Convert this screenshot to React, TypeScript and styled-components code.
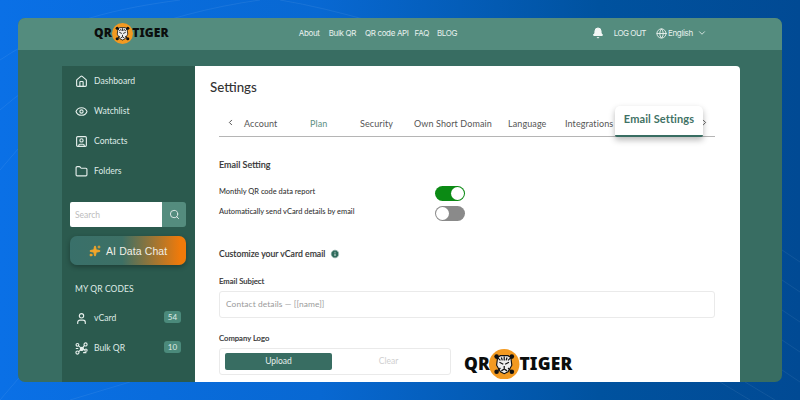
import React from "react";
import styled, { createGlobalStyle } from "styled-components";
import { House, Eye, SquareUser, Folder, Search, Sparkles, User, Bell, Globe, ChevronDown, ChevronLeft, ChevronRight, Info } from "lucide-react";

const Global = createGlobalStyle`
  html, body { margin: 0; padding: 0; width: 800px; height: 400px; overflow: hidden; }
  * { box-sizing: border-box; }
  body { font-family: "Lato", "Liberation Sans", sans-serif; }
`;

const Page = styled.div`
  position: relative;
  width: 800px;
  height: 400px;
  padding: 18px;
  overflow: hidden;
  background: linear-gradient(90deg, #0a70e6 0%, #0868d2 40%, #00529f 75%, #014a94 100%);
`;
const Decor = styled.svg`
  position: absolute;
  inset: 0;
  width: 800px;
  height: 400px;
`;
const Win = styled.div`
  position: relative;
  width: 764px;
  height: 364px;
  border-radius: 7px;
  overflow: hidden;
  background: #386d62;
  display: flex;
  flex-direction: column;
`;
const Header = styled.header`
  height: 32px;
  flex: none;
  background: #548c7e;
  display: flex;
  align-items: center;
  padding: 0 0 2px 76px;
  color: #e8f1ee;
  font-family: "Inter", "Noto Sans", sans-serif;
  font-size: 8px;
  letter-spacing: -0.35px;
`;
const NavList = styled.nav`
  margin-left: 130px;
  display: flex;
`;
const NavLink = styled.span<{ $gap?: number }>`
  margin-right: ${(p) => p.$gap ?? 0}px;
`;
const HeaderRight = styled.div`
  margin-left: 134.5px;
  display: flex;
  align-items: center;
`;
const LogOut = styled.span`
  margin-left: 10px;
  letter-spacing: -0.5px;
`;
const Lang = styled.span`
  margin-left: 10px;
  display: flex;
  align-items: center;
  gap: 1px;
`;
const LogoWrap = styled.div<{ $s: number }>`
  display: flex;
  align-items: center;
  flex: none;
  color: #0b0d0c;
  font-family: "Noto Sans", "Liberation Sans", sans-serif;
  font-weight: 900;
  font-size: ${(p) => p.$s}px;
  letter-spacing: ${(p) => p.$s * 0.01}px;
  line-height: 1;
`;
const LogoMark = styled.svg<{ $s: number }>`
  width: ${(p) => p.$s * 1.75}px;
  height: ${(p) => p.$s * 1.75}px;
  margin: 0 ${(p) => -p.$s * 0.03}px;
  flex: none;
`;
const Body = styled.div`
  flex: 1;
  min-height: 0;
  display: flex;
  padding: 16px 42px 0 44px;
`;
const Side = styled.aside`
  width: 133px;
  flex: none;
  background: #2b5a4e;
  display: flex;
  flex-direction: column;
  color: #dfeae6;
  font-size: 8.6px;
`;
const NavItem = styled.div`
  height: 30px;
  display: flex;
  align-items: center;
  gap: 6px;
  padding-left: 13px;
`;
const NavGroup = styled.div`
  display: flex;
  flex-direction: column;
`;
const SearchRow = styled.div`
  display: flex;
  height: 25px;
  margin: 16px 9px 0 8px;
`;
const SearchField = styled.div`
  flex: 1;
  background: #fff;
  color: #bcbcbc;
  font-size: 8.5px;
  display: flex;
  align-items: center;
  padding-left: 5px;
  border-radius: 2px 0 0 2px;
`;
const SearchBtn = styled.div`
  width: 24px;
  background: #548c7e;
  display: flex;
  align-items: center;
  justify-content: center;
  border-radius: 0 3px 3px 0;
`;
const AiBtn = styled.div`
  height: 29px;
  margin: 9px 9px 0 8px;
  border-radius: 7px;
  background: linear-gradient(90deg, #39706a 0%, #3d7065 45%, #f07a0a 95%);
  box-shadow: 0 2px 5px rgba(0,0,0,0.3);
  display: flex;
  align-items: center;
  gap: 5px;
  padding-left: 19px;
  color: #f1efe6;
  font-family: "Liberation Sans", sans-serif;
  font-size: 10.5px;
  letter-spacing: 0.1px;
`;
const SideTitle = styled.div`
  margin: 18px 0 0 13px;
  font-size: 8.5px;
  line-height: 12px;
  letter-spacing: 0.1px;
`;
const QrRows = styled.div`
  margin-top: 8px;
  display: flex;
  flex-direction: column;
`;
const Badge = styled.span`
  margin-left: auto;
  margin-right: 14px;
  margin-top: -3px;
  width: 17px;
  height: 12px;
  border-radius: 3px;
  background: #4b8a7b;
  font-size: 8px;
  display: flex;
  align-items: center;
  justify-content: center;
`;
const Main = styled.main`
  flex: 1;
  min-width: 0;
  background: #fff;
  border-radius: 0 4px 0 0;
  padding: 0 25px 0 24px;
  overflow: hidden;
  color: #3b3b3b;
`;
const Title = styled.h1`
  margin: 12px 0 0 -9px;
  font-size: 13.3px;
  line-height: 18px;
  font-weight: 500;
  color: #333;
`;
const Tabs = styled.div`
  margin-top: 10px;
  height: 31px;
  border-bottom: 1px solid #b5b5b5;
  display: flex;
  align-items: flex-end;
  font-size: 9px;
  color: #555;
  padding-left: 7px;
  letter-spacing: 0.1px;
`;
const TabNav = styled.span`
  width: 18px;
  height: 18px;
  flex: none;
  display: flex;
  align-items: flex-start;
`;
const Tab = styled.span<{ $w: number; $on?: boolean }>`
  width: ${(p) => p.$w}px;
  flex: none;
  height: 18px;
  white-space: nowrap;
  color: ${(p) => (p.$on ? "#5d8f83" : "#555")};
`;
const ActiveTab = styled.span`
  flex: none;
  width: 88px;
  height: 31px;
  margin-bottom: -1px;
  border-radius: 5px 5px 2px 2px;
  background: #fff;
  border-bottom: 2px solid #386d62;
  box-shadow: 0 3px 6px rgba(0,0,0,0.28);
  color: #3f7265;
  font-size: 11px;
  font-weight: 700;
  display: flex;
  align-items: center;
  justify-content: center;
  padding-bottom: 4px;
`;
const TabEnd = styled.span`
  height: 18px;
  display: flex;
  margin-left: -3px;
`;
const SectionTitle = styled.h2`
  margin: 22px 0 0;
  font-size: 9px;
  line-height: 12px;
  font-weight: 500;
  color: #333;
  -webkit-text-stroke: 0.15px #333;
`;
const ToggleRow = styled.div<{ $top: number }>`
  margin-top: ${(p) => p.$top}px;
  height: 15px;
  display: flex;
  align-items: center;
  font-size: 7.45px;
  font-weight: 500;
  color: #333;
`;
const RowLabel = styled.span`
  width: 216px;
  flex: none;
  margin-top: -4px;
`;
const Toggle = styled.span<{ $on: boolean }>`
  width: 30px;
  height: 15px;
  border-radius: 8px;
  display: flex;
  justify-content: ${(p) => (p.$on ? "flex-end" : "flex-start")};
  background: ${(p) => (p.$on ? "#0b8a14" : "#8a8a8a")};
  padding: 1px;
`;
const Knob = styled.span`
  width: 13px;
  height: 13px;
  border-radius: 50%;
  background: #fff;
`;
const Customize = styled.div`
  margin-top: 25.5px;
  display: flex;
  align-items: center;
  gap: 5px;
  font-size: 8.7px;
  line-height: 14px;
  font-weight: 500;
  color: #333;
  -webkit-text-stroke: 0.15px #333;
`;
const FieldLabel = styled.div<{ $top: number }>`
  margin-top: ${(p) => p.$top}px;
  font-size: 7.7px;
  line-height: 10px;
  font-weight: 500;
  color: #333;
  -webkit-text-stroke: 0.15px #333;
`;
const TextBox = styled.div`
  margin-top: 5px;
  height: 27px;
  border: 1px solid #eaeaea;
  border-radius: 3px;
  display: flex;
  align-items: center;
  padding-left: 6px;
  font-size: 8.4px;
  color: #9a9a9a;
  letter-spacing: 0.1px;
`;
const LogoRow = styled.div`
  margin-top: 5px;
  display: flex;
  align-items: flex-start;
`;
const UploadBox = styled.div`
  width: 232px;
  height: 27px;
  flex: none;
  border: 1px solid #eaeaea;
  border-radius: 3px;
  display: flex;
  align-items: center;
  padding: 0 5px;
`;
const UploadBtn = styled.div`
  width: 107px;
  height: 17px;
  background: #386d62;
  color: #e6efec;
  border-radius: 2px;
  font-size: 8.5px;
  display: flex;
  align-items: center;
  justify-content: center;
`;
const ClearBtn = styled.div`
  flex: 1;
  text-align: center;
  font-size: 8.5px;
  color: #cfcfcf;
`;
const LogoSlot = styled.div`
  margin-left: 13px;
  margin-top: 1px;
`;
const Hint = styled.div`
  margin-top: 3px;
  width: 237px;
  display: flex;
  justify-content: space-between;
  font-size: 8px;
  line-height: 10px;
  color: #777;
`;

const Logo = ({ s }: { s: number }) => (
  <LogoWrap $s={s}>
    QR
    <LogoMark $s={s} viewBox="0 0 32 32">
      <circle cx="16" cy="16" r="16" fill="#f39a21" />
      <path d="M9 9 L12 7 L20 7 L23 9 L24 17 L20 24 L16 26 L12 24 L8 17Z" fill="#eee" stroke="#111" strokeWidth="1.2" />
      <path d="M11 14l4 2M21 14l-4 2M16 18v3M13 23l3-2 3 2M13 9l1 3M19 9l-1 3M16 8v4" stroke="#111" strokeWidth="1.3" fill="none" />
      <path d="M8 8l4 4M24 8l-4 4M8 24l4-4M24 24l-4-4" stroke="#111" strokeWidth="1.2" />
      <circle cx="8" cy="8" r="2.4" fill="#111" />
      <circle cx="24" cy="8" r="2.4" fill="#111" />
      <circle cx="8" cy="24" r="2.4" fill="#111" />
      <circle cx="24" cy="24" r="2.4" fill="#111" />
    </LogoMark>
    TIGER
  </LogoWrap>
);

const BulkIcon = () => (
  <svg width="13" height="13" viewBox="0 0 16 16" fill="none" stroke="#e6efec" strokeWidth="1.4">
    <circle cx="3" cy="3.5" r="1.7" />
    <circle cx="13" cy="3" r="1.9" />
    <circle cx="3" cy="13" r="1.9" />
    <circle cx="8.5" cy="8.5" r="1.9" fill="#e6efec" />
    <circle cx="13.5" cy="10" r="1.4" />
    <path d="M4.3 4.8l3 2.4M11.5 4.4L9.6 7M4.5 11.8l2.7-2.2M10.3 8.9l1.9.6M1 8h3M10 13h4" />
  </svg>
);

const iconProps = { size: 13, color: "#e6efec", strokeWidth: 2.1 };

export default function App() {
  return (
    <Page>
      <Global />
      <Decor viewBox="0 0 800 400" fill="none" stroke="#ffffff" strokeOpacity="0.07">
        <path d="M0 60C60 20 120 8 180 0M0 110C70 50 160 14 260 0M0 170L60 100M280 0C340 10 400 30 470 50" />
        <path d="M0 400L60 330M70 400L130 382M782 250L800 262M782 280L800 292M782 310L800 322M782 340L800 352M782 370L800 382M720 382L750 400M745 382L775 400" />
      </Decor>
      <Win>
        <Header>
          <Logo s={12} />
          <NavList>
            <NavLink $gap={9}>About</NavLink>
            <NavLink $gap={9}>Bulk QR</NavLink>
            <NavLink $gap={6}>QR code API</NavLink>
            <NavLink $gap={8}>FAQ</NavLink>
            <NavLink>BLOG</NavLink>
          </NavList>
          <HeaderRight>
            <Bell size={12} color="#f2f6f5" fill="#f2f6f5" />
            <LogOut>LOG OUT</LogOut>
            <Lang>
              <Globe size={11} color="#e8f1ee" />
              English
              <ChevronDown size={10} color="#e8f1ee" style={{ marginLeft: 3 }} />
            </Lang>
          </HeaderRight>
        </Header>
        <Body>
          <Side>
            <NavGroup>
              <NavItem><House {...iconProps} />Dashboard</NavItem>
              <NavItem><Eye {...iconProps} />Watchlist</NavItem>
              <NavItem><SquareUser {...iconProps} />Contacts</NavItem>
              <NavItem><Folder {...iconProps} />Folders</NavItem>
            </NavGroup>
            <SearchRow>
              <SearchField>Search</SearchField>
              <SearchBtn><Search size={11} color="#e6efec" /></SearchBtn>
            </SearchRow>
            <AiBtn>
              <Sparkles size={12} color="#f4a62a" fill="#f4a62a" />
              AI Data Chat
            </AiBtn>
            <SideTitle>MY QR CODES</SideTitle>
            <QrRows>
              <NavItem><User {...iconProps} />vCard<Badge>54</Badge></NavItem>
              <NavItem><BulkIcon />Bulk QR<Badge>10</Badge></NavItem>
            </QrRows>
          </Side>
          <Main>
            <Title>Settings</Title>
            <Tabs>
              <TabNav><ChevronLeft size={9} color="#444" strokeWidth={2.4} /></TabNav>
              <Tab $w={66}>Account</Tab>
              <Tab $w={50} $on>Plan</Tab>
              <Tab $w={54}>Security</Tab>
              <Tab $w={94}>Own Short Domain</Tab>
              <Tab $w={57}>Language</Tab>
              <Tab $w={50}>Integrations</Tab>
              <ActiveTab>Email Settings</ActiveTab>
              <TabEnd><ChevronRight size={9} color="#444" strokeWidth={2.4} /></TabEnd>
            </Tabs>
            <SectionTitle>Email Setting</SectionTitle>
            <ToggleRow $top={15}>
              <RowLabel>Monthly QR code data report</RowLabel>
              <Toggle $on><Knob /></Toggle>
            </ToggleRow>
            <ToggleRow $top={5}>
              <RowLabel>Automatically send vCard details by email</RowLabel>
              <Toggle $on={false}><Knob /></Toggle>
            </ToggleRow>
            <Customize>
              Customize your vCard email
              <Info size={10} color="#fff" fill="#2f6b5c" />
            </Customize>
            <FieldLabel $top={15}>Email Subject</FieldLabel>
            <TextBox>Contact details — [[name]]</TextBox>
            <FieldLabel $top={15}>Company Logo</FieldLabel>
            <LogoRow>
              <UploadBox>
                <UploadBtn>Upload</UploadBtn>
                <ClearBtn>Clear</ClearBtn>
              </UploadBox>
              <LogoSlot><Logo s={17.4} /></LogoSlot>
            </LogoRow>
            <Hint>
              <span>Recommended formats: JPG, PNG, SVG</span>
              <span>Max size: 2 MB</span>
            </Hint>
          </Main>
        </Body>
      </Win>
    </Page>
  );
}
